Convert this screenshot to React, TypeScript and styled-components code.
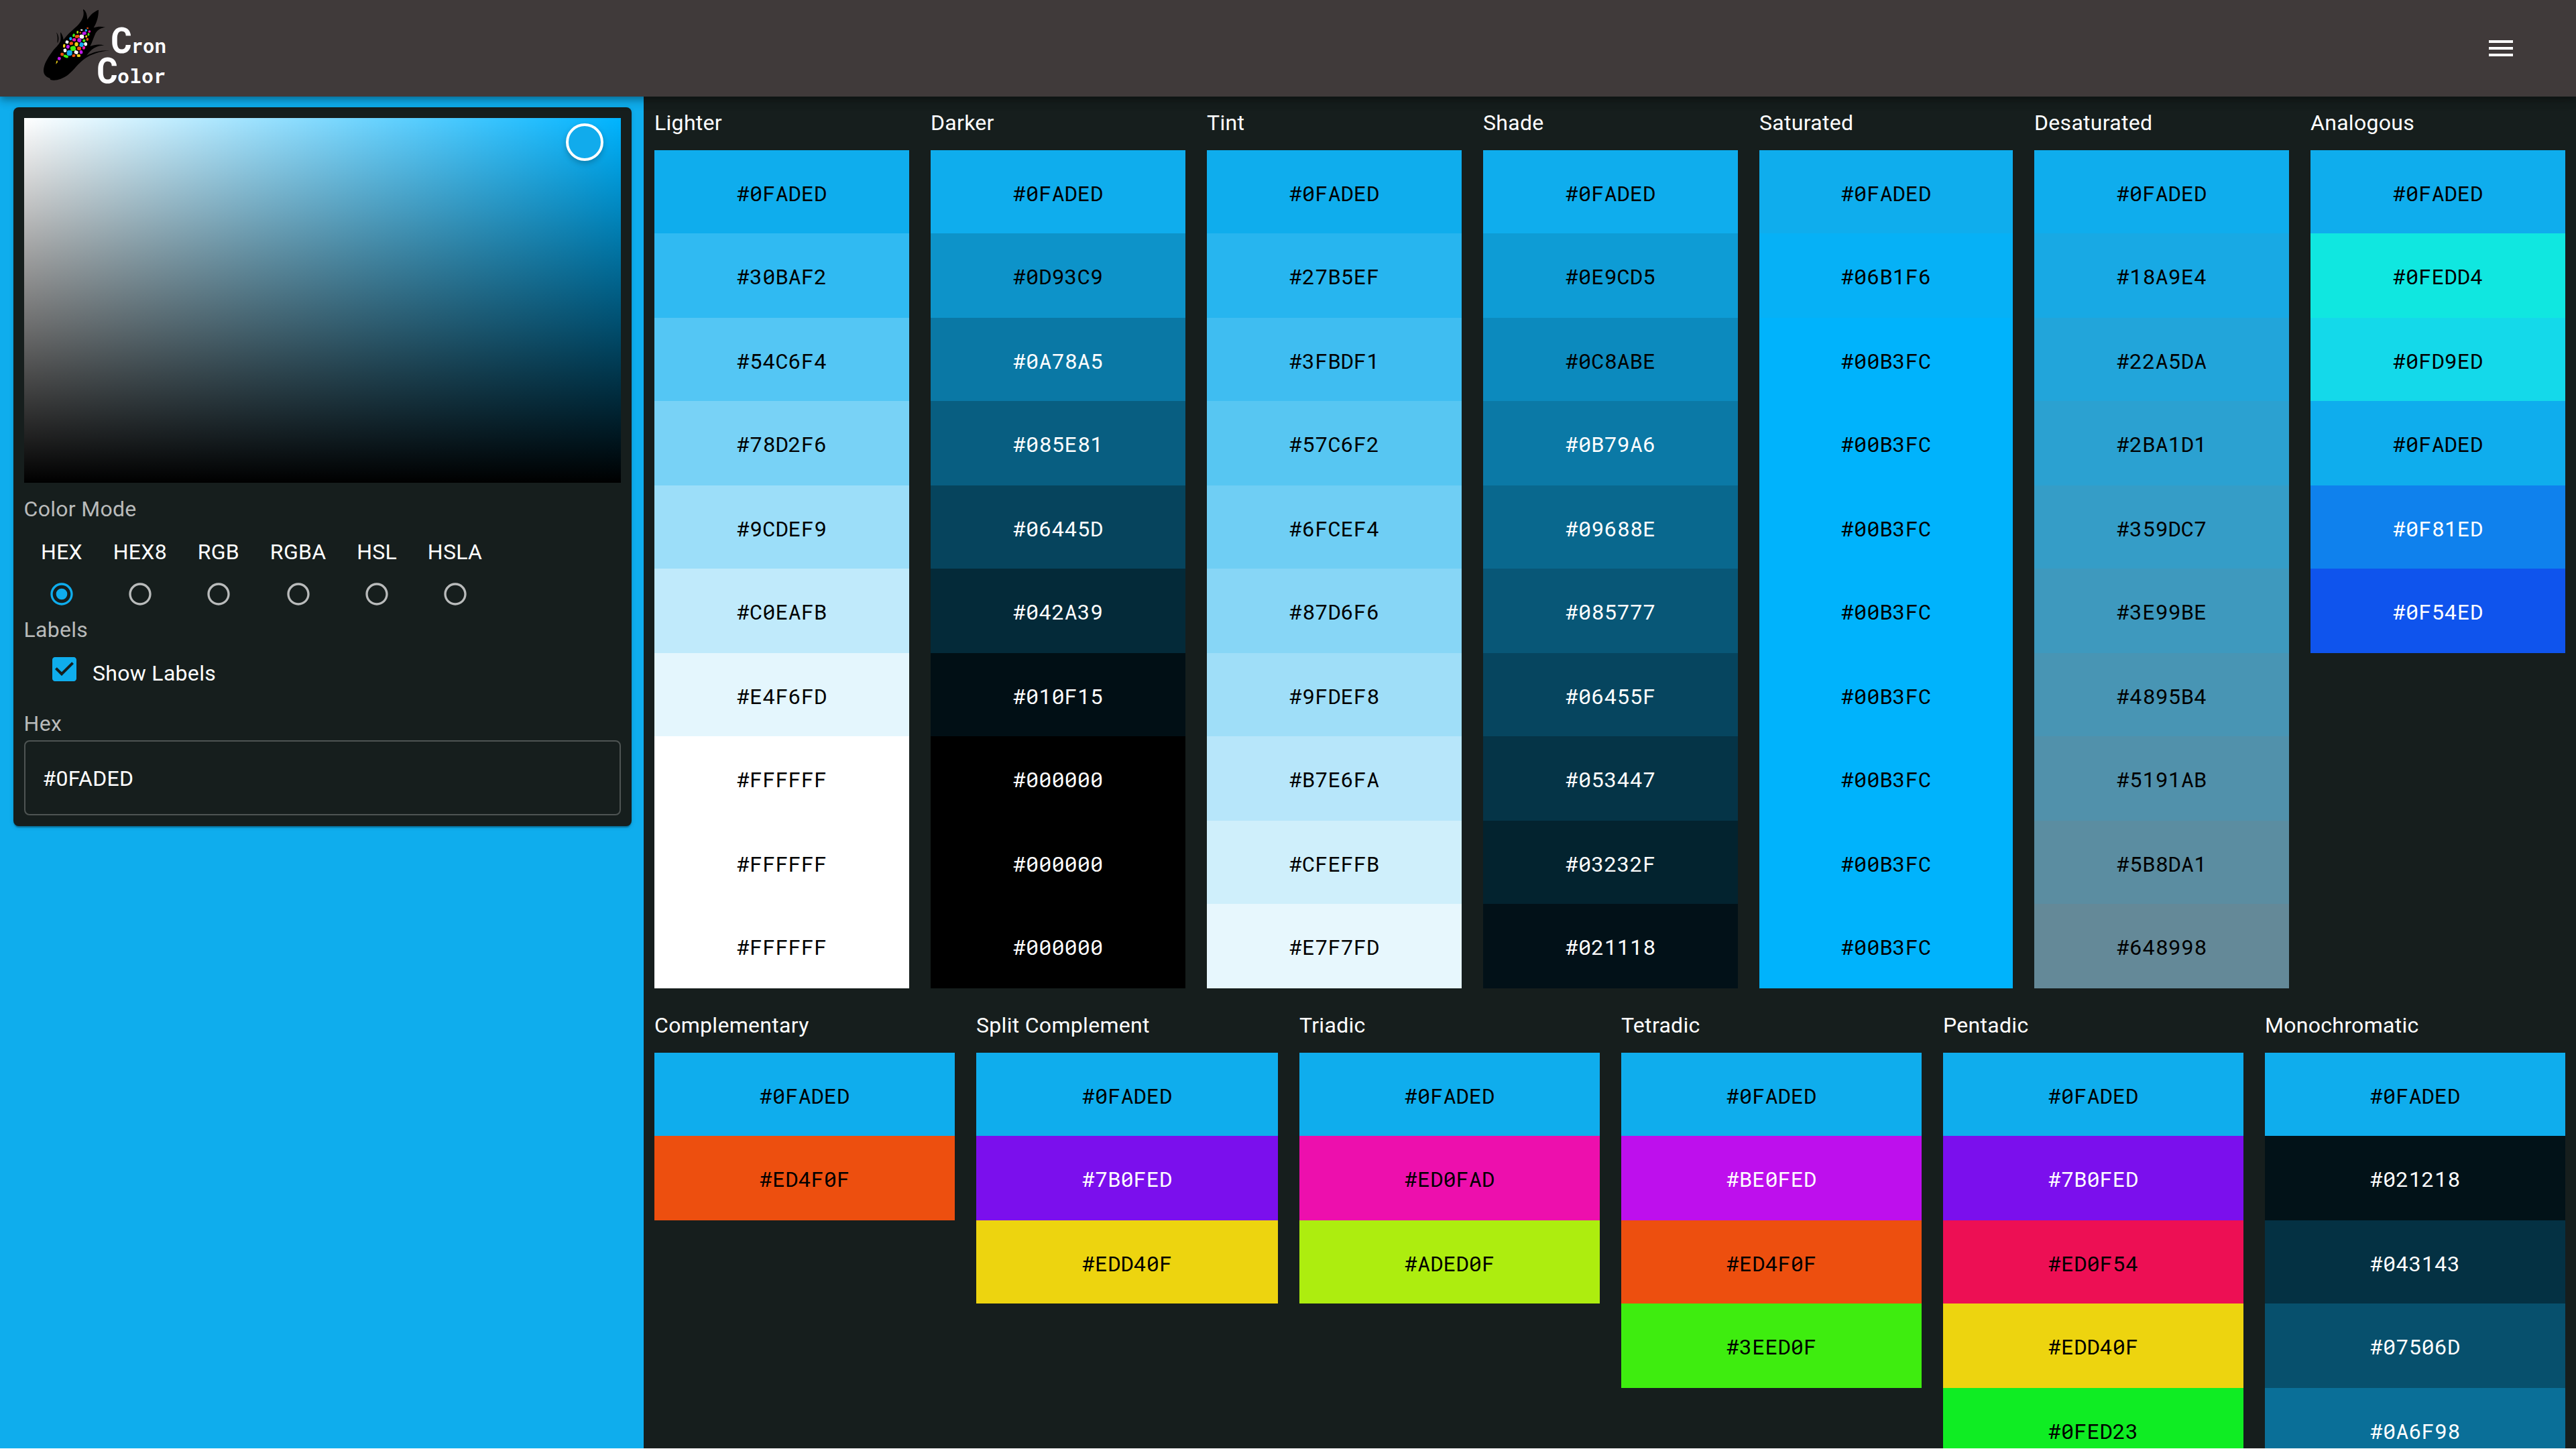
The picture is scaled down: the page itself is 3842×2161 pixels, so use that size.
import React from 'react';
import styled, { createGlobalStyle } from 'styled-components';

const GlobalStyle = createGlobalStyle`
  * { box-sizing: border-box; }
  body {
    margin: 0;
    background: #fff;
    color: #fff;
    font-family: Roboto, "Liberation Sans", sans-serif;
    font-size: 32px;
    line-height: 48px;
    letter-spacing: 0.3px;
    overflow: hidden;
  }
`;

const ACCENT = '#0faded';
const SURFACE = '#161e1d';
const MUTED = '#b9bbbb';

const Page = styled.div`
  display: flex;
  flex-direction: column;
  width: 3842px;
  height: 2160px;
  overflow: hidden;
  background: ${SURFACE};
`;

const Header = styled.header`
  display: flex;
  align-items: center;
  justify-content: space-between;
  flex: none;
  height: 144px;
  padding: 0 88px 0 40px;
  background: #403a3a;
  z-index: 1;
  box-shadow: 0 4px 8px -2px rgba(0, 0, 0, 0.2), 0 8px 10px rgba(0, 0, 0, 0.14),
    0 2px 20px rgba(0, 0, 0, 0.12);
`;

const MenuButton = styled.button`
  display: flex;
  padding: 0;
  border: 0;
  background: none;
  color: #fff;
`;

const Body = styled.div`
  display: flex;
  flex: 1;
  min-height: 0;
`;

const Sidebar = styled.aside`
  flex: none;
  width: 960px;
  padding: 16px 18px 0 20px;
  background: ${ACCENT};
`;

const PickerCard = styled.section`
  display: flex;
  flex-direction: column;
  height: 1072px;
  padding: 16px;
  border-radius: 8px;
  background: ${SURFACE};
  box-shadow: 0 4px 2px -2px rgba(0, 0, 0, 0.2), 0 2px 2px rgba(0, 0, 0, 0.14),
    0 2px 6px rgba(0, 0, 0, 0.12);
`;

const Spectrum = styled.div`
  position: relative;
  flex: none;
  height: 544px;
  background: linear-gradient(to top, #000, rgba(0, 0, 0, 0)),
    linear-gradient(to right, #fff, rgba(255, 255, 255, 0)), #00b4ff;
`;

const Handle = styled.div`
  position: absolute;
  left: 808px;
  top: 8px;
  width: 56px;
  height: 56px;
  border: 4px solid #fff;
  border-radius: 50%;
  background: #11abec;
  box-shadow: 0 4px 8px rgba(0, 0, 0, 0.22);
`;

const FieldLabel = styled.div<{ $top?: number }>`
  margin-top: ${(p) => p.$top ?? 0}px;
  margin-left: -0.5px;
  color: ${MUTED};
`;

const Modes = styled.div`
  display: flex;
  gap: 45.75px;
  margin-top: 16px;
  padding-left: 25px;
`;

const Mode = styled.label`
  display: flex;
  flex-direction: column;
  align-items: center;
  height: 116px;
`;

const RadioIcon = styled.svg<{ $on: boolean }>`
  width: 40px;
  height: 40px;
  margin-top: 19px;
  fill: ${(p) => (p.$on ? ACCENT : MUTED)};
`;

const CheckRow = styled.label`
  display: flex;
  align-items: flex-start;
  height: 92px;
  padding: 11px 0 0 36px;
`;

const CheckIcon = styled.svg`
  width: 48px;
  height: 48px;
  fill: ${ACCENT};
`;

const CheckText = styled.span`
  margin: 6px 0 0 18px;
`;

const HexField = styled.div`
  height: 112px;
  margin-top: 1px;
  padding: 31px 25.5px;
  border: 2px solid #4e5453;
  border-radius: 8px;
`;

const Palettes = styled.main`
  flex: 1;
  min-width: 0;
`;

const PaletteRow = styled.div<{ $tracks: string }>`
  display: grid;
  grid-template-columns: ${(p) => p.$tracks};
  padding: 15px 0 16px;
`;

const Column = styled.section`
  padding: 0 16px;
`;

const PaletteTitle = styled.h2`
  margin: 0 0 17px;
  font-size: 32px;
  font-weight: 400;
`;

const Swatch = styled.div<{ $color: string; $light: boolean }>`
  height: 124px;
  padding-top: 40px;
  background: ${(p) => p.$color};
  color: ${(p) => (p.$light ? '#fff' : '#000')};
  font-family: "Roboto Mono", "DejaVu Sans Mono", monospace;
  letter-spacing: 0;
  text-align: center;
  line-height: 48px;
  &:nth-child(odd) { height: 126px; }
`;

type Palette = { name: string; colors: string[] };

const LIGHT_TEXT = new Set(
  ('0A78A5 085E81 06445D 042A39 010F15 000000 0B79A6 09688E 085777 06455F 053447 03232F 021118 ' +
    '0F81ED 0F54ED 7B0FED BE0FED 021218 043143 07506D 0A6F98').split(' ')
);

const FILLS: Record<string, string> = { '0FEDD4': '#10e7e0', '0FD9ED': '#14d9ea' };

const palette = (name: string, list: string): Palette => ({ name, colors: ('0FADED ' + list).split(' ') });

const shades: Palette[] = [
  palette('Lighter', '30BAF2 54C6F4 78D2F6 9CDEF9 C0EAFB E4F6FD FFFFFF FFFFFF FFFFFF'),
  palette('Darker', '0D93C9 0A78A5 085E81 06445D 042A39 010F15 000000 000000 000000'),
  palette('Tint', '27B5EF 3FBDF1 57C6F2 6FCEF4 87D6F6 9FDEF8 B7E6FA CFEFFB E7F7FD'),
  palette('Shade', '0E9CD5 0C8ABE 0B79A6 09688E 085777 06455F 053447 03232F 021118'),
  palette('Saturated', '06B1F6 00B3FC 00B3FC 00B3FC 00B3FC 00B3FC 00B3FC 00B3FC 00B3FC'),
  palette('Desaturated', '18A9E4 22A5DA 2BA1D1 359DC7 3E99BE 4895B4 5191AB 5B8DA1 648998'),
  palette('Analogous', '0FEDD4 0FD9ED 0FADED 0F81ED 0F54ED'),
];

const harmonies: Palette[] = [
  palette('Complementary', 'ED4F0F'),
  palette('Split Complement', '7B0FED EDD40F'),
  palette('Triadic', 'ED0FAD ADED0F'),
  palette('Tetradic', 'BE0FED ED4F0F 3EED0F'),
  palette('Pentadic', '7B0FED ED0F54 EDD40F 0FED23'),
  palette('Monochromatic', '021218 043143 07506D 0A6F98'),
];

const PaletteColumn = ({ name, colors }: Palette) => (
  <Column>
    <PaletteTitle>{name}</PaletteTitle>
    {colors.map((c, i) => (
      <Swatch key={i} $color={FILLS[c] ?? '#' + c} $light={LIGHT_TEXT.has(c)}>
        #{c}
      </Swatch>
    ))}
  </Column>
);

const modes = ['HEX', 'HEX8', 'RGB', 'RGBA', 'HSL', 'HSLA'];

type Kernel = [number, number, number, number, string];
const O = '#f4510f', B = '#12a9ee', M = '#c116ee', G = '#3fee12', W = '#ffffff', P = '#ee12ad', Y = '#edd015', L = '#a9e010';
const kernels: Kernel[] = [
  [272, 126, 4, 3, O], [245, 134, 5, 3, W], [265, 136, 5, 5, B], [280, 141, 5, 5, P],
  [227, 144, 4, 6, L], [239, 146, 4, 3, O], [257, 149, 9, 7, M], [276, 154, 4, 6, G],
  [210, 158, 5, 7, G], [225, 163, 10, 7, O], [246, 164, 10, 9, W], [266, 163, 4, 5, Y],
  [196, 173, 6, 7, B], [212, 178, 8, 7, P], [235, 180, 9, 9, M], [256, 182, 6, 6, G], [271, 176, 5, 6, O],
  [180, 188, 7, 7, W], [199, 194, 8, 7, O], [222, 198, 8, 9, Y], [245, 200, 9, 10, B], [263, 197, 7, 8, W],
  [167, 205, 5, 8, Y], [184, 209, 7, 8, M], [207, 217, 12, 11, G], [234, 217, 9, 8, O], [255, 214, 6, 7, P],
  [171, 226, 7, 8, W], [191, 237, 12, 12, B], [221, 234, 9, 8, W], [243, 233, 7, 8, M],
  [158, 243, 7, 7, O], [175, 252, 11, 6, G], [210, 249, 7, 6, O], [232, 249, 8, 6, Y],
  [145, 262, 7, 7, M],
];

const Logo = () => (
  <svg width="240" height="144" viewBox="0 0 720 432" aria-label="Cron Color">
    <path
      fill="#000"
      d="M103 350C84 344 74 332 75 313C76 288 93 260 112 234C128 212 143 203 150 184C154 169 149 157 151 144C158 154 163 166 164 178C182 153 202 137 225 116C243 99 255 78 254 58C254 50 251 45 252 41C262 46 267 57 269 71L271 88C284 66 300 52 321 44C321 75 313 101 299 124C317 118 333 118 352 122C331 124 317 133 308 148C298 169 293 190 283 207C304 199 325 197 347 203C318 202 294 215 278 235C273 242 270 245 268 248C299 232 336 223 371 226C329 229 288 243 260 262C231 282 211 314 183 336C156 355 128 363 106 357Z"
    />
    <path fill="#000" d="M132 145C144 159 145 177 138 193C134 185 142 171 132 145Z" />
    {kernels.map(([x, y, rx, ry, c], i) => (
      <rect
        key={i}
        x={x - rx}
        y={y - ry}
        width={rx * 2}
        height={ry * 2}
        rx={rx * 0.75}
        ry={ry * 0.75}
        fill={c}
        transform={`rotate(${(i % 3) * 14 - 10} ${x} ${y})`}
      />
    ))}
    <path fill={Y} d="M136 269L138 278L130 287L132 275Z" />
    <g fill="#fdfdff" fontFamily='"Roboto Mono", monospace' fontWeight="700" letterSpacing="0">
      <text x="376" y="236" fontSize="160">C</text>
      <text x="467" y="237" fontSize="87">ron</text>
      <text x="313" y="372" fontSize="160">C</text>
      <text x="405" y="373" fontSize="90">olor</text>
    </g>
  </svg>
);

export default function App() {
  return (
    <>
      <GlobalStyle />
      <Page>
        <Header>
          <Logo />
          <MenuButton aria-label="Menu">
            <svg width="48" height="48" viewBox="0 0 24 24" fill="currentColor">
              <path d="M3 18h18v-2H3v2zm0-5h18v-2H3v2zm0-7v2h18V6H3z" />
            </svg>
          </MenuButton>
        </Header>
        <Body>
          <Sidebar>
            <PickerCard>
              <Spectrum>
                <Handle />
              </Spectrum>
              <FieldLabel $top={15}>Color Mode</FieldLabel>
              <Modes>
                {modes.map((m, i) => (
                  <Mode key={m}>
                    {m}
                    <RadioIcon viewBox="0 0 24 24" $on={i === 0}>
                      <path d="M12 2C6.48 2 2 6.48 2 12s4.48 10 10 10 10-4.48 10-10S17.52 2 12 2zm0 18c-4.42 0-8-3.58-8-8s3.58-8 8-8 8 3.58 8 8-3.58 8-8 8z" />
                      {i === 0 && <circle cx="12" cy="12" r="5" />}
                    </RadioIcon>
                  </Mode>
                ))}
              </Modes>
              <FieldLabel>Labels</FieldLabel>
              <CheckRow>
                <CheckIcon viewBox="0 0 24 24">
                  <path d="M19 3H5c-1.11 0-2 .9-2 2v14c0 1.1.89 2 2 2h14c1.11 0 2-.9 2-2V5c0-1.1-.89-2-2-2zm-9 14l-5-5 1.41-1.41L10 14.17l7.59-7.59L19 8l-9 9z" />
                </CheckIcon>
                <CheckText>Show Labels</CheckText>
              </CheckRow>
              <FieldLabel>Hex</FieldLabel>
              <HexField>#0FADED</HexField>
            </PickerCard>
          </Sidebar>
          <Palettes>
            <PaletteRow $tracks="repeat(4, 412px) 410px repeat(2, 412px)">
              {shades.map((p) => (
                <PaletteColumn key={p.name} {...p} />
              ))}
            </PaletteRow>
            <PaletteRow $tracks="480px 482px repeat(4, 480px)">
              {harmonies.map((p) => (
                <PaletteColumn key={p.name} {...p} />
              ))}
            </PaletteRow>
          </Palettes>
        </Body>
      </Page>
    </>
  );
}
